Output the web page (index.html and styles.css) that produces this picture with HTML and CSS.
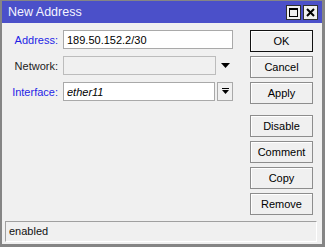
FILE: index.html
```html
<html>
	<head>
		<title>New Address</title>
		<link rel="stylesheet" href="styles.css">
	</head>
	<body>
		<div class="window">
			<div class="titlebar">
				<span class="title">New Address</span>
				<span class="title-buttons">
					<span class="tbtn">
						<svg width="13" height="13" viewBox="0 0 13 13"><rect x="2.5" y="2.5" width="8" height="8" fill="none" stroke="#000" stroke-width="1"/><rect x="2" y="2" width="9" height="2" fill="#000"/></svg>
					</span>
					<span class="tbtn">
						<svg width="13" height="13" viewBox="0 0 13 13"><path d="M3 3 L10 10 M10 3 L3 10" stroke="#000" stroke-width="2"/></svg>
					</span>
				</span>
			</div>

			<div class="content">
				<form class="fields">
					<label class="label link">Address:</label>
					<div class="row">
						<input class="field" type="text" value="189.50.152.2/30">
					</div>

					<label class="label">Network:</label>
					<div class="row">
						<input class="field disabled" type="text" disabled>
						<span class="drop">
							<svg width="9" height="5" viewBox="0 0 9 5"><path d="M0 0 H9 L4.5 5 Z" fill="#000"/></svg>
						</span>
					</div>

					<label class="label link">Interface:</label>
					<div class="row">
						<input class="field italic" type="text" value="ether11">
						<span class="dropbtn">
							<svg width="7" height="7" viewBox="0 0 7 7"><rect x="0" y="0" width="7" height="1" fill="#000"/><path d="M0 2 H7 L3.5 6 Z" fill="#000"/></svg>
						</span>
					</div>
				</form>

				<div class="actions">
					<button class="btn default">OK</button>
					<button class="btn">Cancel</button>
					<button class="btn">Apply</button>
					<div class="spacer"></div>
					<button class="btn">Disable</button>
					<button class="btn">Comment</button>
					<button class="btn">Copy</button>
					<button class="btn">Remove</button>
				</div>
			</div>

			<div class="status">enabled</div>
		</div>
	</body>
</html>
```

FILE: styles.css
```css
body {
	margin: 0;
	font-family: "Liberation Sans", Arial, sans-serif;
	font-size: 11px;
}

.window {
	width: 325px;
	height: 247px;
	box-sizing: border-box;
	display: flex;
	flex-direction: column;
	background: #f0f0f0;
	border-style: solid;
	border-color: #858585;
	border-width: 1px 3px 3px 2px;
}

.titlebar {
	height: 22px;
	flex: none;
	display: flex;
	align-items: center;
	justify-content: space-between;
	background: #4b50c9;
	color: #f4f4ff;
	font-size: 12.5px;
	padding: 0 4px 0 6px;
}

.title-buttons {
	display: flex;
	gap: 2px;
}

.tbtn {
	width: 13px;
	height: 13px;
	display: flex;
	background: #f0f0f0;
	border: 1px solid #303030;
}

.content {
	flex: 1;
	display: flex;
	padding: 7px 0 0 0;
}

.fields {
	margin: 0;
	display: grid;
	grid-template-columns: 56px 170px;
	grid-auto-rows: 19px;
	column-gap: 5px;
	row-gap: 7px;
	align-items: center;
}

.label {
	text-align: right;
	color: #222;
}

.link {
	color: #1f1fe6;
}

.row {
	display: flex;
	height: 19px;
}

.field {
	flex: 1;
	min-width: 0;
	height: 19px;
	box-sizing: border-box;
	border: 1px solid #a9a9a9;
	background: #fff;
	font-family: inherit;
	font-size: 11px;
	padding: 0 3px;
	color: #000;
}

.field.disabled {
	background: #f0f0f0;
	border-color: #bcbcbc;
	flex: none;
	width: 153px;
}

.italic {
	font-style: italic;
}

.drop {
	flex: 1;
	display: flex;
	align-items: center;
	justify-content: center;
	padding-left: 2px;
}

.dropbtn {
	width: 16px;
	height: 19px;
	box-sizing: border-box;
	margin-left: 2px;
	display: flex;
	align-items: center;
	justify-content: center;
	border: 1px solid #a9a9a9;
	background: #f0f0f0;
}

.actions {
	display: flex;
	flex-direction: column;
	gap: 4px;
	margin-left: 17px;
}

.spacer {
	height: 3px;
}

.btn {
	width: 63px;
	height: 22px;
	padding: 0;
	box-sizing: border-box;
	background: #f0f0f0;
	border: 1px solid #8d8d8d;
	box-shadow: inset 1px 1px #fff;
	font-family: inherit;
	font-size: 11px;
	color: #000;
}

.btn.default {
	border-color: #111;
}

.status {
	flex: none;
	height: 21px;
	box-sizing: border-box;
	margin: 0 5px 2px 3px;
	padding: 3px 3px 0;
	border-style: solid;
	border-width: 1px;
	border-color: #a0a0a0 #fff #fff #a0a0a0;
	color: #111;
}
```
